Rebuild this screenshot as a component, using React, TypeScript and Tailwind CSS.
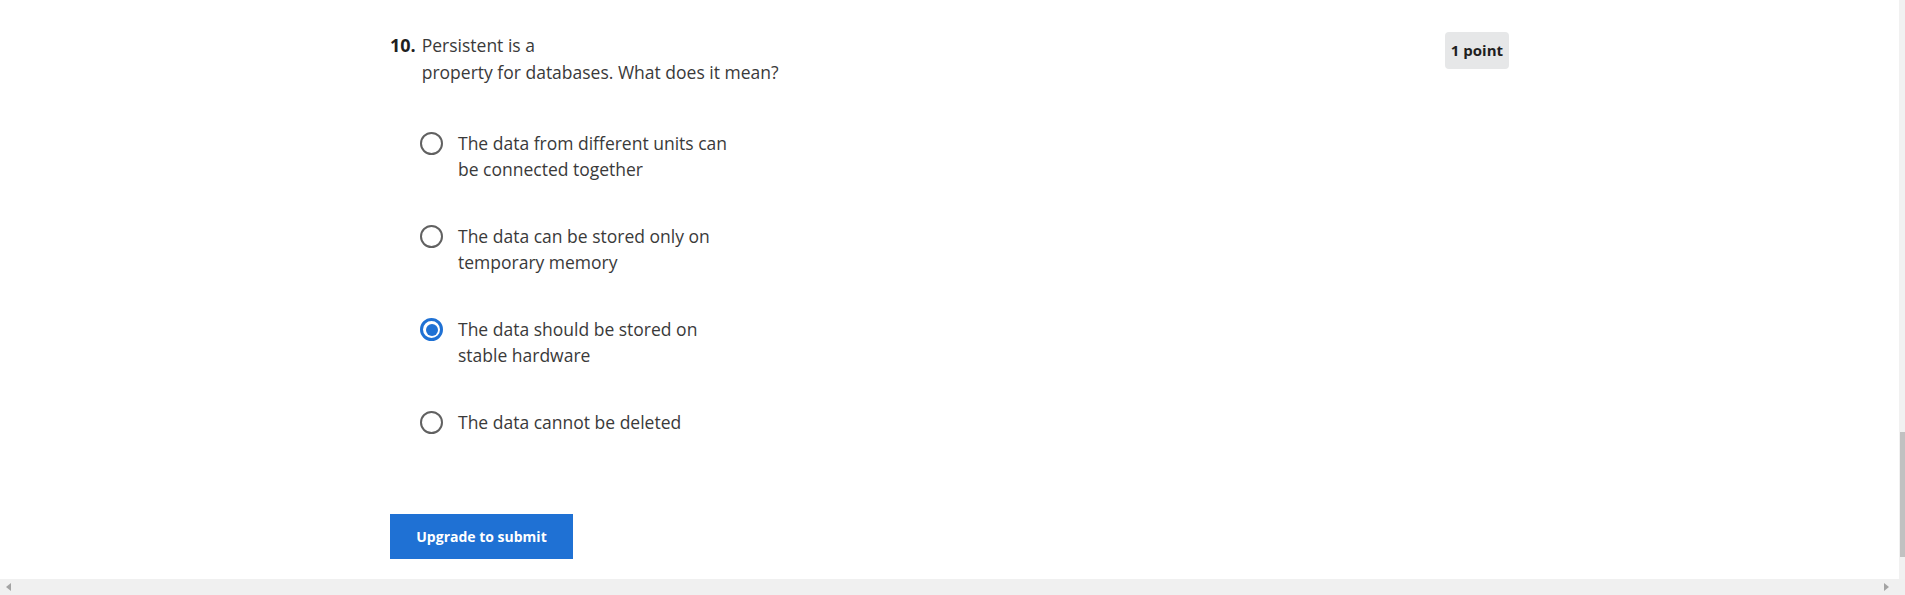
import React from "react";

type Option = {
  id: string;
  lines: string[];
};

const options: Option[] = [
  { id: "a", lines: ["The data from different units can", "be connected together"] },
  { id: "b", lines: ["The data can be stored only on", "temporary memory"] },
  { id: "c", lines: ["The data should be stored on", "stable hardware"] },
  { id: "d", lines: ["The data cannot be deleted"] },
];

const Radio: React.FC<{ checked: boolean }> = ({ checked }) =>
  checked ? (
    <span className="mt-[2px] flex h-[23px] w-[23px] shrink-0 items-center justify-center rounded-full border-[3px] border-[#1f71d4]">
      <span className="h-[12px] w-[12px] rounded-full bg-[#1f71d4]"></span>
    </span>
  ) : (
    <span className="mt-[2px] block h-[23px] w-[23px] shrink-0 rounded-full border-[2.5px] border-[#616161]"></span>
  );

export default function App() {
  const [selected, setSelected] = React.useState("c");

  return (
    <div
      className="flex h-[595px] w-full flex-col overflow-hidden bg-white text-[#3a3a3a]"
      style={{ fontFamily: '"Open Sans", "Noto Sans", sans-serif' }}
    >
      <div className="flex min-h-0 flex-1">
        <div className="flex-1 pl-[390px] pt-[32px]">
          <div className="flex w-[1119px] items-start justify-between">
            <div className="flex text-[17.5px] leading-[27px]">
              <span className="mr-[6px] text-[18px] font-bold text-[#1f1f1f]">10.</span>
              <div>
                <div>Persistent is a</div>
                <div>property for databases. What does it mean?</div>
              </div>
            </div>
            <span className="flex h-[37px] items-center rounded-[4px] bg-[#e6e7e8] px-[6px] text-[15px] font-bold text-[#1f1f1f]">
              1 point
            </span>
          </div>

          <div className="mt-[44px] flex flex-col gap-[41px] pl-[30px]">
            {options.map((opt) => (
              <label
                key={opt.id}
                className="flex cursor-pointer items-start gap-[15px] text-[17.5px] leading-[26px]"
                onClick={() => setSelected(opt.id)}
              >
                <Radio checked={selected === opt.id} />
                <div>
                  {opt.lines.map((l) => (
                    <div key={l}>{l}</div>
                  ))}
                </div>
              </label>
            ))}
          </div>

          <button className="mt-[79px] h-[45px] w-[183px] bg-[#1f71d4] text-[14px] font-bold text-white">
            Upgrade to submit
          </button>
        </div>

        {/* vertical scrollbar */}
        <div className="flex w-[6px] flex-col bg-[#f1f1f1] pl-[1px]">
          <div className="h-[432px]"></div>
          <div className="h-[125px] bg-[#c1c1c1]"></div>
        </div>
      </div>

      {/* horizontal scrollbar */}
      <div className="flex h-[16px] items-center justify-between bg-[#f0f0f0] px-[6px]">
        <span className="h-0 w-0 border-y-[4px] border-r-[5px] border-y-transparent border-r-[#a3a3a3]"></span>
        <span className="mr-[10px] h-0 w-0 border-y-[4px] border-l-[5px] border-y-transparent border-l-[#a3a3a3]"></span>
      </div>
    </div>
  );
}
